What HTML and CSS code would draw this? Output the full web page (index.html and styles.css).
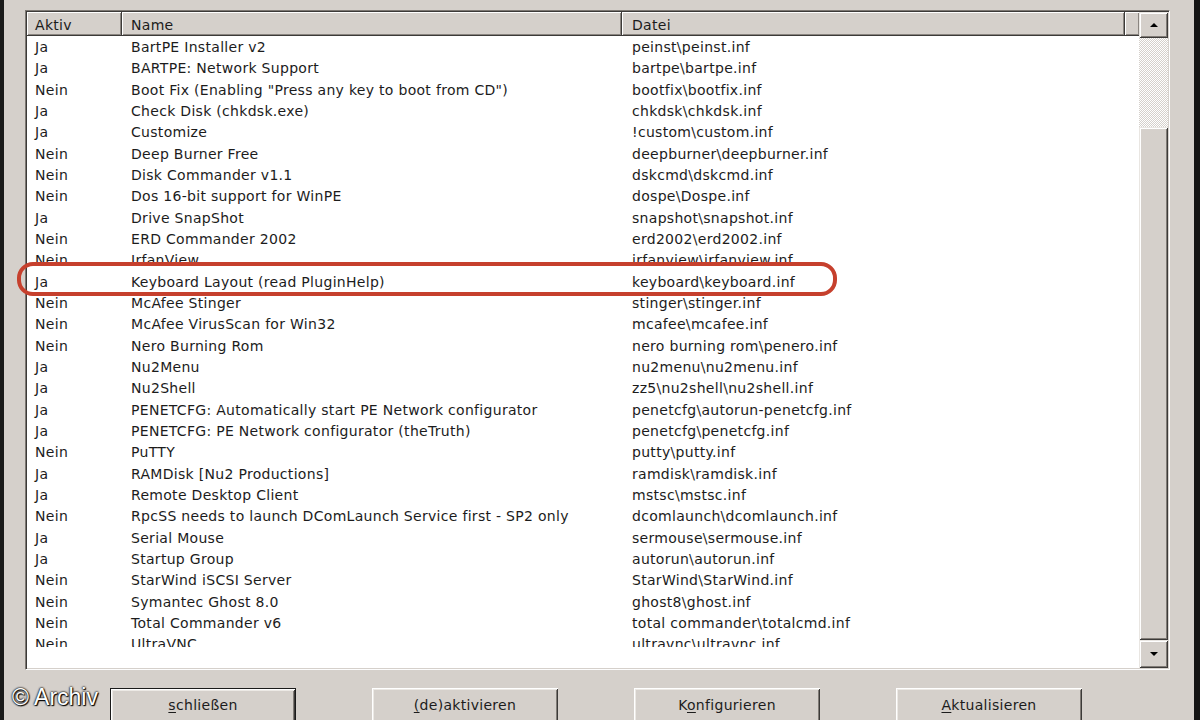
FILE: index.html
```html
<!DOCTYPE html>
<html lang="de">
<head>
<meta charset="utf-8">
<title>Plugins</title>
<link rel="stylesheet" href="styles.css">
</head>
<body>
<div class="window">
  <div class="edge-left"></div>
  <div class="main">
    <div class="listbox">
      <div class="list">
        <div class="header">
          <div class="hcell c1">Aktiv</div>
          <div class="hcell c2">Name</div>
          <div class="hcell c3">Datei</div>
          <div class="hcell c4"></div>
        </div>
        <div class="rows">
          <div class="row"><span>Ja</span><span>BartPE Installer v2</span><span>peinst\peinst.inf</span></div>
          <div class="row"><span>Ja</span><span>BARTPE: Network Support</span><span>bartpe\bartpe.inf</span></div>
          <div class="row"><span>Nein</span><span>Boot Fix (Enabling "Press any key to boot from CD")</span><span>bootfix\bootfix.inf</span></div>
          <div class="row"><span>Ja</span><span>Check Disk (chkdsk.exe)</span><span>chkdsk\chkdsk.inf</span></div>
          <div class="row"><span>Ja</span><span>Customize</span><span>!custom\custom.inf</span></div>
          <div class="row"><span>Nein</span><span>Deep Burner Free</span><span>deepburner\deepburner.inf</span></div>
          <div class="row"><span>Nein</span><span>Disk Commander v1.1</span><span>dskcmd\dskcmd.inf</span></div>
          <div class="row"><span>Nein</span><span>Dos 16-bit support for WinPE</span><span>dospe\Dospe.inf</span></div>
          <div class="row"><span>Ja</span><span>Drive SnapShot</span><span>snapshot\snapshot.inf</span></div>
          <div class="row"><span>Nein</span><span>ERD Commander 2002</span><span>erd2002\erd2002.inf</span></div>
          <div class="row cut"><span>Nein</span><span>IrfanView</span><span>irfanview\irfanview.inf</span></div>
          <div class="row kb"><span>Ja</span><span>Keyboard Layout (read PluginHelp)</span><span>keyboard\keyboard.inf</span></div>
          <div class="row"><span>Nein</span><span>McAfee Stinger</span><span>stinger\stinger.inf</span></div>
          <div class="row"><span>Nein</span><span>McAfee VirusScan for Win32</span><span>mcafee\mcafee.inf</span></div>
          <div class="row"><span>Nein</span><span>Nero Burning Rom</span><span>nero burning rom\penero.inf</span></div>
          <div class="row"><span>Ja</span><span>Nu2Menu</span><span>nu2menu\nu2menu.inf</span></div>
          <div class="row"><span>Ja</span><span>Nu2Shell</span><span>zz5\nu2shell\nu2shell.inf</span></div>
          <div class="row"><span>Ja</span><span>PENETCFG: Automatically start PE Network configurator</span><span>penetcfg\autorun-penetcfg.inf</span></div>
          <div class="row"><span>Ja</span><span>PENETCFG: PE Network configurator (theTruth)</span><span>penetcfg\penetcfg.inf</span></div>
          <div class="row"><span>Nein</span><span>PuTTY</span><span>putty\putty.inf</span></div>
          <div class="row"><span>Ja</span><span>RAMDisk [Nu2 Productions]</span><span>ramdisk\ramdisk.inf</span></div>
          <div class="row"><span>Ja</span><span>Remote Desktop Client</span><span>mstsc\mstsc.inf</span></div>
          <div class="row"><span>Nein</span><span>RpcSS needs to launch DComLaunch Service first - SP2 only</span><span>dcomlaunch\dcomlaunch.inf</span></div>
          <div class="row"><span>Ja</span><span>Serial Mouse</span><span>sermouse\sermouse.inf</span></div>
          <div class="row"><span>Ja</span><span>Startup Group</span><span>autorun\autorun.inf</span></div>
          <div class="row"><span>Nein</span><span>StarWind iSCSI Server</span><span>StarWind\StarWind.inf</span></div>
          <div class="row"><span>Nein</span><span>Symantec Ghost 8.0</span><span>ghost8\ghost.inf</span></div>
          <div class="row"><span>Nein</span><span>Total Commander v6</span><span>total commander\totalcmd.inf</span></div>
          <div class="row last"><span>Nein</span><span>UltraVNC</span><span>ultravnc\ultravnc.inf</span></div>
        </div>
      </div>
      <div class="vscroll">
        <div class="sbtn up"><i class="tri-up"></i></div>
        <div class="track"></div>
        <div class="thumb"></div>
        <div class="sbtn down"><i class="tri-down"></i></div>
      </div>
    </div>
    <div class="buttons">
      <div class="btn default"><u>s</u>chließen</div>
      <div class="btn"><u>(</u>de)aktivieren</div>
      <div class="btn">K<u>o</u>nfigurieren</div>
      <div class="btn"><u>A</u>ktualisieren</div>
    </div>
  </div>
  <div class="edge-right"></div>
  <div class="mark"></div>
  <div class="watermark">© Archiv</div>
</div>
</body>
</html>
```
FILE: styles.css
```css
body {
  margin: 0;
  overflow: hidden;
  font-family: "DejaVu Sans", "Liberation Sans", sans-serif;
  font-size: 14px;
  color: #1c1c1c;
}

.window {
  position: relative;
  display: flex;
  width: 1200px;
  height: 720px;
  background: #d5d0cb;
  overflow: hidden;
}

.edge-left {
  flex: none;
  width: 4px;
  background: #1a1a1a;
}

.edge-right {
  flex: none;
  width: 6px;
  background: #141414;
}

.main {
  flex: 1;
  padding: 10px 0 0 21px;
}

.listbox {
  display: flex;
  box-sizing: border-box;
  width: 1145px;
  height: 660px;
  padding: 1px;
  border: 1px solid;
  border-color: #7d7873 #fdfdfd #fdfdfd #7d7873;
  box-shadow: inset 1px 1px #3c3a38, inset -1px -1px #d5d0cb;
}

.list {
  flex: 1;
  min-width: 0;
  background: #fff;
  overflow: hidden;
}

.header {
  display: flex;
  height: 24px;
}

.hcell {
  box-sizing: border-box;
  height: 24px;
  padding-top: 2px;
  line-height: 22px;
  background: #d5d0cb;
  box-shadow: inset 1px 1px #fff, inset -1px -1px #8a8580;
  border-right: 1px solid #3c3a38;
  border-bottom: 1px solid #3c3a38;
  white-space: nowrap;
  letter-spacing: 0.3px;
}

.c1 { width: 95px; padding-left: 8px; }
.c2 { width: 500px; padding-left: 9px; }
.c3 { width: 503px; padding-left: 10px; }
.c4 { flex: 1; border-right: none; }

.rows {
  padding-top: 1px;
}

.row {
  display: grid;
  grid-template-columns: 95px 500px 1fr;
  height: 21.33px;
  line-height: 21.33px;
  white-space: nowrap;
  letter-spacing: 0.3px;
}

.row span {
  overflow: hidden;
}

.row span:nth-child(1) { padding-left: 8px; }
.row span:nth-child(2) { padding-left: 9px; }
.row span:nth-child(3) { padding-left: 10px; }

.row.cut {
  height: 13px;
  overflow: hidden;
}

.row.kb {
  padding-top: 8.33px;
}

.row.last {
  height: 13px;
  overflow: hidden;
}

.vscroll {
  flex: none;
  width: 29px;
  display: flex;
  flex-direction: column;
}

.sbtn,
.thumb {
  background: #d5d0cb;
  box-shadow: inset 1px 1px #e9e6e2, inset -1px -1px #3c3a38, inset 2px 2px #fff, inset -2px -2px #807b76;
}

.sbtn {
  flex: none;
  height: 26px;
  display: flex;
  align-items: center;
  justify-content: center;
}

.sbtn.down {
  height: 28px;
}

.track {
  flex: none;
  height: 89px;
  background: repeating-conic-gradient(#fff 0 25%, #d5d0cb 0 50%) 0 0 / 2px 2px;
}

.thumb {
  flex: 1;
}

.tri-up,
.tri-down {
  width: 0;
  height: 0;
  border-left: 4px solid transparent;
  border-right: 4px solid transparent;
}

.tri-up { border-bottom: 4px solid #000; }
.tri-down { border-top: 4px solid #000; }

.buttons {
  display: flex;
  gap: 76px;
  margin: 18px 0 0 85px;
}

.btn {
  flex: none;
  box-sizing: border-box;
  width: 186px;
  height: 40px;
  padding-top: 8px;
  line-height: 18px;
  text-align: center;
  letter-spacing: 0.3px;
  background: #d5d0cb;
  box-shadow: inset 1px 1px #fff, inset -1px -1px #3c3a38, inset 2px 2px #ece9e5, inset -2px -2px #807b76;
}

.btn.default {
  border: 1px solid #1a1a1a;
  padding-top: 7px;
}

.btn u {
  text-underline-offset: 2px;
}

.mark {
  position: absolute;
  left: 17px;
  top: 262px;
  width: 820px;
  height: 34px;
  box-sizing: border-box;
  border: 4px solid #c6402d;
  border-radius: 16px;
}

.watermark {
  position: absolute;
  left: 12px;
  top: 684px;
  font-family: "Liberation Sans", Arial, sans-serif;
  font-size: 23px;
  color: #fff;
  text-shadow: 0 0 2px #000, 0 0 2px #000, 1px 1px 1px #000;
}
```
